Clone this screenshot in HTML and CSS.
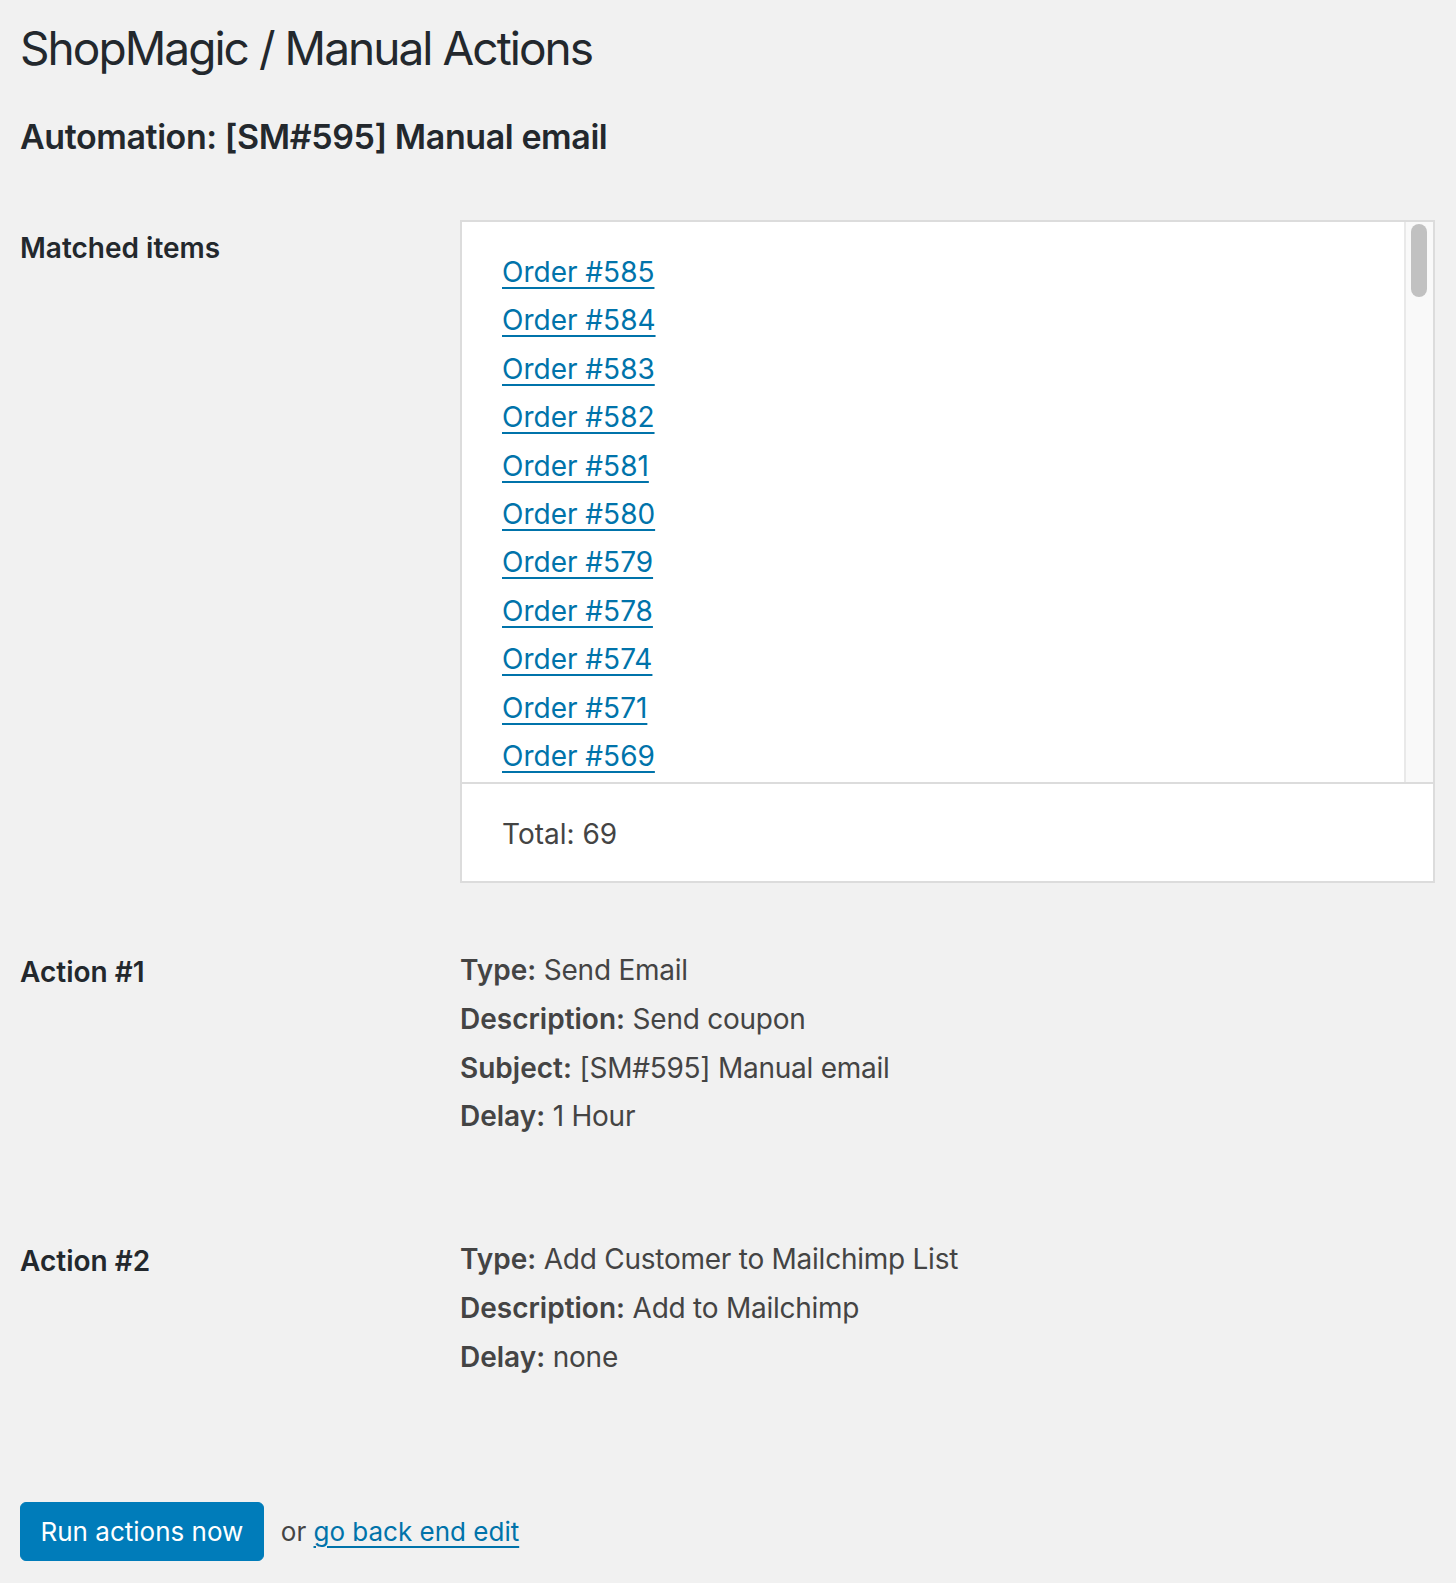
FILE: index.html
```html
<!DOCTYPE html>
<html lang="en">
<head>
    <meta charset="UTF-8">
    <meta name="viewport" content="width=device-width, initial-scale=1.0">
    <title>ShopMagic / Manual Actions</title>
    <link rel="stylesheet" href="styles.css">
</head>
<body>
    <div class="wrap">
        <h1>ShopMagic / Manual Actions</h1>
        <h2>Automation: [SM#595] Manual email</h2>

        <div class="form-table">
            <!-- Matched items -->
            <div class="form-row">
                <div class="form-label">Matched items</div>
                <div class="form-field">
                    <div class="matched-box">
                        <div class="matched-scroll">
                            <ul class="matched-list">
                                <li><a href="#">Order #585</a></li>
                                <li><a href="#">Order #584</a></li>
                                <li><a href="#">Order #583</a></li>
                                <li><a href="#">Order #582</a></li>
                                <li><a href="#">Order #581</a></li>
                                <li><a href="#">Order #580</a></li>
                                <li><a href="#">Order #579</a></li>
                                <li><a href="#">Order #578</a></li>
                                <li><a href="#">Order #574</a></li>
                                <li><a href="#">Order #571</a></li>
                                <li><a href="#">Order #569</a></li>
                                <li><a href="#">Order #568</a></li>
                                <li><a href="#">Order #567</a></li>
                                <li><a href="#">Order #565</a></li>
                                <li><a href="#">Order #564</a></li>
                                <li><a href="#">Order #562</a></li>
                                <li><a href="#">Order #560</a></li>
                                <li><a href="#">Order #559</a></li>
                                <li><a href="#">Order #557</a></li>
                                <li><a href="#">Order #556</a></li>
                                <li><a href="#">Order #554</a></li>
                                <li><a href="#">Order #553</a></li>
                                <li><a href="#">Order #551</a></li>
                                <li><a href="#">Order #549</a></li>
                                <li><a href="#">Order #548</a></li>
                                <li><a href="#">Order #546</a></li>
                                <li><a href="#">Order #545</a></li>
                                <li><a href="#">Order #543</a></li>
                                <li><a href="#">Order #541</a></li>
                                <li><a href="#">Order #540</a></li>
                                <li><a href="#">Order #538</a></li>
                                <li><a href="#">Order #537</a></li>
                                <li><a href="#">Order #535</a></li>
                                <li><a href="#">Order #534</a></li>
                                <li><a href="#">Order #532</a></li>
                                <li><a href="#">Order #530</a></li>
                                <li><a href="#">Order #529</a></li>
                                <li><a href="#">Order #527</a></li>
                                <li><a href="#">Order #526</a></li>
                                <li><a href="#">Order #524</a></li>
                                <li><a href="#">Order #523</a></li>
                                <li><a href="#">Order #521</a></li>
                                <li><a href="#">Order #519</a></li>
                                <li><a href="#">Order #518</a></li>
                                <li><a href="#">Order #516</a></li>
                                <li><a href="#">Order #515</a></li>
                                <li><a href="#">Order #513</a></li>
                                <li><a href="#">Order #512</a></li>
                                <li><a href="#">Order #510</a></li>
                                <li><a href="#">Order #508</a></li>
                                <li><a href="#">Order #507</a></li>
                                <li><a href="#">Order #505</a></li>
                                <li><a href="#">Order #504</a></li>
                                <li><a href="#">Order #502</a></li>
                                <li><a href="#">Order #501</a></li>
                                <li><a href="#">Order #499</a></li>
                                <li><a href="#">Order #498</a></li>
                                <li><a href="#">Order #496</a></li>
                                <li><a href="#">Order #494</a></li>
                                <li><a href="#">Order #493</a></li>
                                <li><a href="#">Order #491</a></li>
                                <li><a href="#">Order #490</a></li>
                                <li><a href="#">Order #488</a></li>
                                <li><a href="#">Order #487</a></li>
                                <li><a href="#">Order #485</a></li>
                                <li><a href="#">Order #484</a></li>
                                <li><a href="#">Order #482</a></li>
                                <li><a href="#">Order #480</a></li>
                                <li><a href="#">Order #479</a></li>
                            </ul>
                            <div class="scrollbar">
                                <div class="scrollbar-thumb"></div>
                            </div>
                        </div>
                        <div class="matched-total">Total: 69</div>
                    </div>
                </div>
            </div>

            <!-- Action #1 -->
            <div class="form-row">
                <div class="form-label">Action #1</div>
                <div class="form-field">
                    <ul class="action-details">
                        <li><strong>Type:</strong> Send Email</li>
                        <li><strong>Description:</strong> Send coupon</li>
                        <li><strong>Subject:</strong> [SM#595] Manual email</li>
                        <li><strong>Delay:</strong> 1 Hour</li>
                    </ul>
                </div>
            </div>

            <!-- Action #2 -->
            <div class="form-row">
                <div class="form-label">Action #2</div>
                <div class="form-field">
                    <ul class="action-details">
                        <li><strong>Type:</strong> Add Customer to Mailchimp List</li>
                        <li><strong>Description:</strong> Add to Mailchimp</li>
                        <li><strong>Delay:</strong> none</li>
                    </ul>
                </div>
            </div>
        </div>

        <p class="submit">
            <button type="button" class="button-primary">Run actions now</button>
            <span>or <a href="#" class="back-link">go back end edit</a></span>
        </p>
    </div>
</body>
</html>
```

FILE: styles.css
```css
* {
    margin: 0;
    padding: 0;
    box-sizing: border-box;
}

body {
    font-family: Inter, 'Noto Sans', sans-serif;
    background: #f1f1f1;
    color: #444;
    font-size: 28px;
}

.wrap {
    padding: 18px 21px 0 20px;
}

h1 {
    color: #23282d;
    font-size: 46px;
    font-weight: 400;
    line-height: 60px;
    letter-spacing: -1.95px;
}

h2 {
    color: #23282d;
    font-size: 34px;
    font-weight: 600;
    line-height: 44px;
    letter-spacing: -0.42px;
    margin-top: 37px;
}

.form-table {
    margin-top: 31px;
}

.form-row {
    display: flex;
}

.form-label {
    flex: 0 0 440px;
    padding: 40px 20px 40px 0;
    color: #23282d;
    font-weight: 600;
    line-height: 36.4px;
}

.form-field {
    flex: 1;
    padding: 32px 0 30px;
}

.form-row:first-child .form-field {
    padding: 30px 0 31px;
}

/* matched items box */
.matched-box {
    background: #fff;
    border: 2px solid #dcdcdc;
}

.matched-scroll {
    display: flex;
    height: 560px;
}

.matched-list {
    flex: 1;
    list-style: none;
    overflow-y: auto;
    scrollbar-width: none;
    padding: 26px 40px 0;
    line-height: 48.4px;
}

.matched-list::-webkit-scrollbar {
    display: none;
}

.scrollbar {
    flex: 0 0 29px;
    background: #f9f9f9;
    border-left: 2px solid #e9e9e9;
    padding: 2px 6px 0 5px;
}

.scrollbar-thumb {
    height: 73px;
    background: #c1c1c1;
    border-radius: 8px;
}

.matched-list a,
.back-link {
    color: #0073aa;
    text-decoration: underline;
    text-decoration-thickness: 2px;
    text-underline-offset: 5px;
}

.matched-total {
    border-top: 2px solid #dcdcdc;
    padding: 32px 40px 29px;
    line-height: 36px;
}

/* action rows */
.action-details {
    list-style: none;
    line-height: 48.8px;
    letter-spacing: -0.25px;
    margin-bottom: 32px;
}

.action-details strong {
    font-weight: 600;
    letter-spacing: 0;
}

/* submit */
.submit {
    margin-top: 38px;
    padding: 20px 0;
    display: flex;
    align-items: center;
    gap: 9px;
    font-size: 26px;
}

.button-primary {
    background: #007cba;
    border: 1px solid #007cba;
    border-radius: 6px;
    color: #fff;
    font-family: inherit;
    font-size: 26px;
    height: 59px;
    padding: 0 19.5px;
    margin-right: 8px;
    cursor: pointer;
}
```
